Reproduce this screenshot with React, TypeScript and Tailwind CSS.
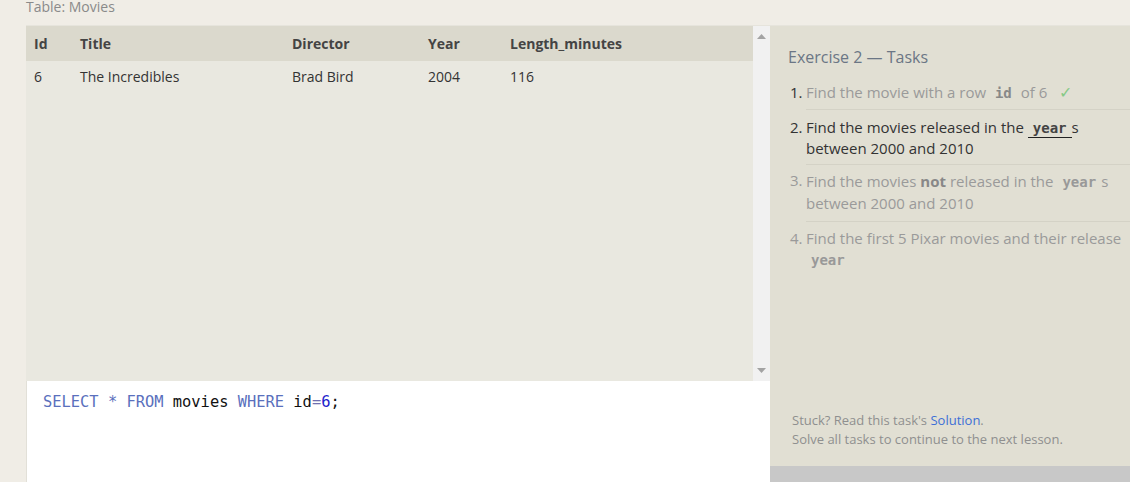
import React from "react";

const cols = "grid grid-cols-[54px_212px_136px_82px_1fr]";

function Mono({ children, className = "" }: { children: React.ReactNode; className?: string }) {
  return (
    <code
      className={"font-bold text-[14px] leading-[14px] px-[5px] " + className}
      style={{ fontFamily: '"DejaVu Sans Mono", "Liberation Mono", monospace' }}
    >
      {children}
    </code>
  );
}

export default function App() {
  const sans = { fontFamily: '"Open Sans", "Noto Sans", sans-serif' };
  const mono = { fontFamily: '"DejaVu Sans Mono", "Liberation Mono", monospace' };
  return (
    <div className="w-[1130px] h-[482px] bg-[#f0ede6] overflow-hidden flex flex-col" style={sans}>
      <div className="h-[25px] pl-[26px] text-[14px] leading-[14px] text-[#8a8a8a]">Table: Movies</div>
      <div className="flex flex-1 min-h-0">
        <div className="w-[26px] shrink-0" />
        <div className="w-[744px] flex flex-col border-t border-[#e6e4dc]">
          <div className="h-[355px] flex">
            <div className="w-[727px] bg-[#e9e8e0] text-[14px] text-[#333]">
              <div className={cols + " h-[35px] items-center bg-[#dbd9cd] font-bold text-[#444]"}>
                <div className="pl-[8px]">Id</div>
                <div>Title</div>
                <div>Director</div>
                <div>Year</div>
                <div>Length_minutes</div>
              </div>
              <div className={cols + " h-[33px] items-center pb-[2px]"}>
                <div className="pl-[8px]">6</div>
                <div>The Incredibles</div>
                <div>Brad Bird</div>
                <div>2004</div>
                <div>116</div>
              </div>
            </div>
            <div className="w-[17px] bg-[#f1f1f1] flex flex-col justify-between items-center py-[8px]">
              <svg width="9" height="5" viewBox="0 0 9 5"><polygon points="4.5,0 9,5 0,5" fill="#a3a3a3" /></svg>
              <svg width="9" height="5" viewBox="0 0 9 5"><polygon points="0,0 9,0 4.5,5" fill="#a3a3a3" /></svg>
            </div>
          </div>
          <div className="flex-1 bg-white border-l border-[#e2e0d8] pt-[10px] pl-[16px] text-[15.4px] leading-[22px]" style={mono}>
            <span className="text-[#5a70bd]">SELECT</span>{" "}
            <span className="text-[#5a70bd]">*</span>{" "}
            <span className="text-[#5a70bd]">FROM</span>{" "}
            <span className="text-[#111]">movies</span>{" "}
            <span className="text-[#5a70bd]">WHERE</span>{" "}
            <span className="text-[#111]">id</span>
            <span className="text-[#6f6fb0]">=</span>
            <span className="text-[#2222cc]">6</span>
            <span className="text-[#111]">;</span>
          </div>
        </div>
        <div className="flex-1 flex flex-col">
          <div className="flex-1 bg-[#e1dfd3] border-t border-[#e6e4dc] flex flex-col">
            <div className="pl-[18px] pt-[20px] text-[16px] leading-[22px] text-[#6b7685]">Exercise 2 — Tasks</div>
            <ol className="mt-[14px] pl-[20px] text-[15px] leading-[21px]">
              <li className="flex text-[#9a9a9a]">
                <span className="w-[16px] shrink-0 text-[#333]">1.</span>
                <div className="flex-1 border-b border-[#d4d2c6] pb-[6px]">
                  Find the movie with a row <Mono className="text-[#888]">id</Mono> of 6
                  <span className="text-[#86c986] ml-[12px] text-[16px] leading-[16px]">✓</span>
                </div>
              </li>
              <li className="flex text-[#333] pt-[7px]">
                <span className="w-[16px] shrink-0">2.</span>
                <div className="flex-1 border-b border-[#d4d2c6] pb-[5px]">
                  Find the movies released in the{" "}
                  <Mono className="text-[#444] border-b-[1.5px] border-[#222] pb-[1px]">year</Mono>s
                  <br />
                  between 2000 and 2010
                </div>
              </li>
              <li className="flex text-[#9a9a9a] pt-[5px]">
                <span className="w-[16px] shrink-0">3.</span>
                <div className="flex-1 border-b border-[#d4d2c6] pb-[7px] leading-[22px]">
                  Find the movies <b className="text-[#888]">not</b> released in the{" "}
                  <Mono className="text-[#999]">year</Mono>s
                  <br />
                  between 2000 and 2010
                </div>
              </li>
              <li className="flex text-[#9a9a9a] pt-[6px]">
                <span className="w-[16px] shrink-0">4.</span>
                <div className="flex-1 pb-[5px]">
                  Find the first 5 Pixar movies and their release
                  <br />
                  <Mono className="text-[#999]">year</Mono>
                </div>
              </li>
            </ol>
            <div className="mt-auto pl-[22px] pb-[17px] text-[13px] leading-[19px] text-[#8f8f8f]">
              <div>
                Stuck? Read this task's <span className="text-[#3d6fd6]">Solution</span>.
              </div>
              <div>Solve all tasks to continue to the next lesson.</div>
            </div>
          </div>
          <div className="h-[16px] bg-[#c8c8c8]" />
        </div>
      </div>
    </div>
  );
}
